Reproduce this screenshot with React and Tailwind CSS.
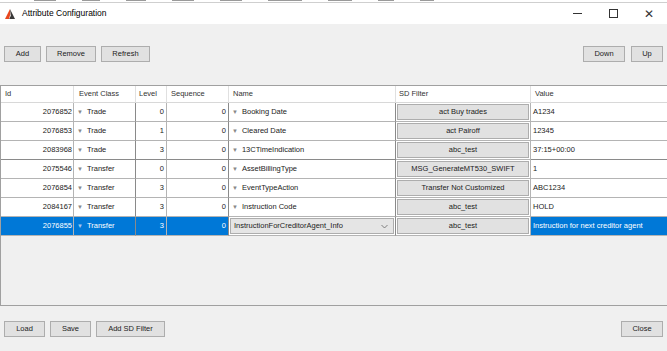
import React from 'react';

const rows = [
  { id: '2076852', cls: 'Trade', level: '0', seq: '0', name: 'Booking Date', filter: 'act Buy trades', value: 'A1234' },
  { id: '2076853', cls: 'Trade', level: '1', seq: '0', name: 'Cleared Date', filter: 'act Pairoff', value: '12345' },
  { id: '2083968', cls: 'Trade', level: '3', seq: '0', name: '13CTimeIndication', filter: 'abc_test', value: '37:15+00:00', thick: true },
  { id: '2075546', cls: 'Transfer', level: '0', seq: '0', name: 'AssetBillingType', filter: 'MSG_GenerateMT530_SWIFT', value: '1' },
  { id: '2076854', cls: 'Transfer', level: '3', seq: '0', name: 'EventTypeAction', filter: 'Transfer Not Customized', value: 'ABC1234' },
  { id: '2084167', cls: 'Transfer', level: '3', seq: '0', name: 'Instruction Code', filter: 'abc_test', value: 'HOLD' },
  { id: '2076855', cls: 'Transfer', level: '3', seq: '0', name: 'InstructionForCreditorAgent_Info', filter: 'abc_test', value: 'Instruction for next creditor agent', selected: true },
];

const headers = [
  ['Id', 'pl-[4px]'],
  ['Event Class', 'pl-[5px]'],
  ['Level', 'pl-[3px]'],
  ['Sequence', 'pl-[4px]'],
  ['Name', 'pl-[4px]'],
  ['SD Filter', 'pl-[3px]'],
  ['Value', 'pl-[4px]'],
];

// widths of the cut-off menu labels of the window behind
const menuBits = [22, 18, 20, 22, 22, 34, 24, 16, 14];

const font = { fontFamily: '"Liberation Sans", Arial, sans-serif' };

function Btn({ children, className = '' }) {
  return (
    <div className={`h-[16px] flex items-center justify-center bg-[#e1e1e1] border border-[#adadad] text-[7.5px] text-[#222] ${className}`}>
      {children}
    </div>
  );
}

function Arrow({ light }) {
  return <span className={`text-[6px] mr-[4px] ${light ? 'text-[#a8c8ee]' : 'text-[#888]'}`}>▼</span>;
}

function Logo() {
  return (
    <svg width="10" height="10" viewBox="0 0 10 10">
      <polygon points="5,0 0,10 4,10 5.2,5.5" fill="#e8471f" />
      <polygon points="5,0 10,10 4.2,10 5.8,6.8" fill="#3a3a3a" />
    </svg>
  );
}

export default function App() {
  return (
    <div className="w-[667px] h-[351px] flex flex-col bg-[#f0f0f0] overflow-hidden text-[#222]" style={font}>
      <div className="h-[3px] bg-white flex items-start gap-[26px] pl-[34px] border-b border-[#cfcfcf]">
        {menuBits.map((w, i) => (
          <div key={i} className="h-[1px] bg-[#9a9a9a]" style={{ width: w }} />
        ))}
      </div>
      <div className="h-[21px] bg-white flex items-center">
        <div className="ml-[5px] mr-[7px] flex"><Logo /></div>
        <span className="text-[8.5px] text-black">Attribute Configuration</span>
        <div className="ml-auto flex items-center">
          <div className="w-[36px] flex justify-center"><div className="w-[9px] h-[1px] bg-[#333]" /></div>
          <div className="w-[36px] flex justify-center"><div className="w-[9px] h-[9px] border border-[#333]" /></div>
          <div className="w-[36px] flex justify-center text-[12px] leading-none text-[#333] font-light">✕</div>
        </div>
      </div>

      <div className="flex px-[4px] pt-[22px]">
        <Btn className="w-[37px]">Add</Btn>
        <Btn className="w-[50px] ml-[5px]">Remove</Btn>
        <Btn className="w-[49px] ml-[5px]">Refresh</Btn>
        <Btn className="w-[42px] ml-auto">Down</Btn>
        <Btn className="w-[32px] ml-[6px]">Up</Btn>
      </div>

      <div className="mt-[23px] h-[221px] border-y border-l border-[#a0a0a0] text-[7.5px]">
        <div className="grid grid-cols-[73px_62px_31px_62px_167px_135px_1fr]">
          {headers.map(([h, pad], i) => (
            <div key={h} className={`h-[17px] flex items-center bg-white border-b border-[#d8d8d8] ${i < 6 ? 'border-r border-r-[#e0e0e0]' : ''} ${pad} text-[#333]`}>
              {h}
            </div>
          ))}
          {rows.map((r) => {
            const sel = r.selected;
            const base = `h-[19px] flex items-center border-b ${r.thick ? 'border-b-[#8a8a8a]' : 'border-b-[#b4b4b4]'} ${sel ? 'bg-[#0078d7] text-white' : 'bg-white'}`;
            return (
              <React.Fragment key={r.id}>
                <div className={`${base} justify-end pr-[1px] border-r border-r-[#b4b4b4]`}>{r.id}</div>
                <div className={`${base} pl-[3px] border-r border-r-[#8a8a8a]`}><Arrow light={sel} />{r.cls}</div>
                <div className={`${base} justify-end pr-[2px] border-r border-r-[#b4b4b4]`}>{r.level}</div>
                <div className={`${base} justify-end pr-[2px] border-r border-r-[#8a8a8a]`}>{r.seq}</div>
                {sel ? (
                  <div className="h-[19px] border-b border-b-[#b4b4b4] border-r border-r-[#8a8a8a] bg-white p-[1px]">
                    <div className="h-full flex items-center bg-[#e5e5e5] border border-[#adadad] pl-[3px] pr-[5px] text-[#222]">
                      <span>{r.name}</span>
                      <svg className="ml-auto" width="7" height="5" viewBox="0 0 7 5"><polyline points="0.5,1 3.5,4 6.5,1" fill="none" stroke="#666" strokeWidth="0.8" /></svg>
                    </div>
                  </div>
                ) : (
                  <div className={`${base} pl-[3px] border-r border-r-[#8a8a8a]`}><Arrow />{r.name}</div>
                )}
                <div className="h-[19px] border-b border-b-[#b4b4b4] border-r border-r-[#b4b4b4] bg-white p-[1px]">
                  <div className="h-full flex items-center justify-center bg-[#e1e1e1] border border-[#adadad] text-[#222]">{r.filter}</div>
                </div>
                <div className={`${base} pl-[2px]`}>{r.value}</div>
              </React.Fragment>
            );
          })}
        </div>
      </div>

      <div className="flex px-[4px] pt-[15px]">
        <Btn className="w-[41px]">Load</Btn>
        <Btn className="w-[41px] ml-[5px]">Save</Btn>
        <Btn className="w-[69px] ml-[5px]">Add SD Filter</Btn>
        <Btn className="w-[42px] ml-auto">Close</Btn>
      </div>
    </div>
  );
}
